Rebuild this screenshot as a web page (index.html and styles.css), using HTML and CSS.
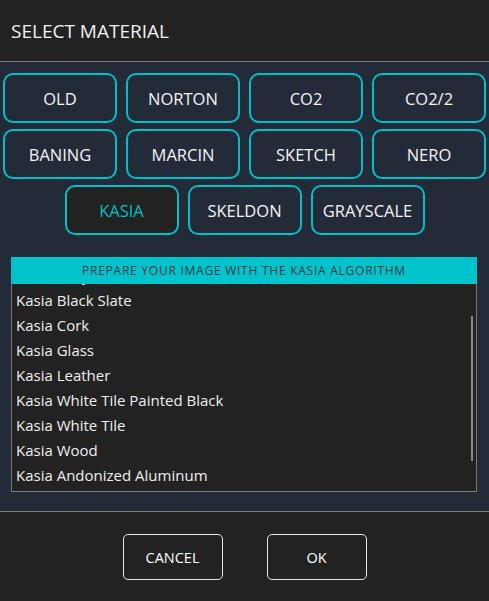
FILE: index.html
```html
<!DOCTYPE html>
<html>
<head>
    <title>Select Material</title>
    <link rel="stylesheet" href="styles.css">
</head>
<body>
    <div class="dialog">
        <div class="dialog-header">SELECT MATERIAL</div>

        <div class="dialog-body">
            <div class="materials">
                <button class="material">OLD</button>
                <button class="material">NORTON</button>
                <button class="material">CO2</button>
                <button class="material">CO2/2</button>
                <button class="material">BANING</button>
                <button class="material">MARCIN</button>
                <button class="material">SKETCH</button>
                <button class="material">NERO</button>
                <button class="material active">KASIA</button>
                <button class="material">SKELDON</button>
                <button class="material">GRAYSCALE</button>
            </div>

            <div class="preset-box">
                <div class="preset-title">PREPARE YOUR IMAGE WITH THE KASIA ALGORITHM</div>
                <div class="preset-scroll">
                    <ul class="preset-list" id="presetList">
                        <li>Kasia Aluminum</li>
                        <li>Kasia Gray Slate</li>
                        <li>Kasia Black Slate</li>
                        <li>Kasia Cork</li>
                        <li>Kasia Glass</li>
                        <li>Kasia Leather</li>
                        <li>Kasia White Tile Painted Black</li>
                        <li>Kasia White Tile</li>
                        <li>Kasia Wood</li>
                        <li>Kasia Andonized Aluminum</li>
                        <li>Kasia Acrylic</li>
                        <li>Kasia Marble</li>
                    </ul>
                    <div class="scroll-thumb"></div>
                </div>
            </div>
        </div>

        <div class="dialog-footer">
            <button class="action">CANCEL</button>
            <button class="action">OK</button>
        </div>
    </div>

    <script>
        // keep the list scrolled a little, like the selection was made further down
        document.getElementById('presetList').scrollTop = 46;
    </script>
</body>
</html>
```

FILE: styles.css
```css
body {
    margin: 0;
    font-family: 'Open Sans', 'Noto Sans', sans-serif;
    background-color: #222222;
    color: #f2f2f2;
}

.dialog {
    width: 489px;
    height: 601px;
    display: flex;
    flex-direction: column;
}

.dialog-header {
    height: 61px;
    padding-left: 11px;
    display: flex;
    align-items: center;
    font-size: 19px;
    border-bottom: 1px solid #7c7c7c;
}

.dialog-body {
    height: 449px;
    background-color: #232a38;
    padding-top: 11px;
    box-sizing: border-box;
}

/* Material buttons */
.materials {
    display: flex;
    flex-wrap: wrap;
    justify-content: center;
    gap: 6px 9px;
}

.material {
    width: 114px;
    height: 50px;
    background-color: #232a38;
    border: 2px solid #00bfca;
    border-radius: 10px;
    color: #f5f5f5;
    font-family: inherit;
    font-size: 16.5px;
    cursor: pointer;
}

.material.active {
    background-color: #222222;
    color: #00bfca;
}

/* Preset list */
.preset-box {
    margin: 22px 12px 0 11px;
}

.preset-title {
    height: 27px;
    background-color: #00c3cc;
    color: #183b40;
    font-size: 12px;
    letter-spacing: 0.75px;
    display: flex;
    align-items: center;
    justify-content: center;
}

.preset-scroll {
    position: relative;
    border: 1px solid #7a7a7a;
    border-top: none;
    background-color: #222222;
}

.preset-list {
    list-style: none;
    margin: 0;
    padding: 0;
    height: 207px;
    overflow: hidden;
}

.preset-list li {
    height: 25px;
    line-height: 25px;
    padding-left: 4px;
    font-size: 15px;
    color: #efefef;
}

.scroll-thumb {
    position: absolute;
    top: 32px;
    right: 3px;
    width: 2px;
    height: 145px;
    background-color: #8a8a8a;
}

/* Footer */
.dialog-footer {
    flex: 1;
    border-top: 1px solid #7c7c7c;
    display: flex;
    justify-content: center;
    gap: 44px;
    padding-top: 22px;
}

.action {
    width: 100px;
    height: 46px;
    background-color: #222222;
    border: 1px solid #e6e6e6;
    border-radius: 5px;
    color: #ffffff;
    font-family: inherit;
    font-size: 14.5px;
    cursor: pointer;
}
```
